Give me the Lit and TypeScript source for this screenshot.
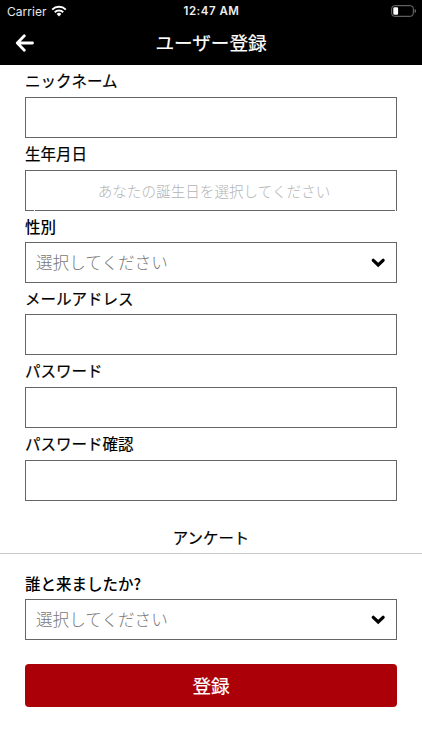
import { LitElement, html, css } from "lit";
import { customElement } from "lit/decorators.js";

@customElement("app-root")
export class AppRoot extends LitElement {
  static styles = css`
    :host { display: block; width: 422px; height: 750px; background: #fff; color: #000; overflow: hidden;
      font-family: "Noto Sans CJK JP", sans-serif; }
    * { box-sizing: border-box; }
    .top { background: #000; color: #fff; height: 65px; }
    .status { height: 21px; display: grid; grid-template-columns: 1fr auto 1fr; align-items: center;
      font: 400 12px/21px Inter, sans-serif; padding: 0 6px 0 7px; }
    .left { display: flex; align-items: center; gap: 4px; letter-spacing: 0.05px; color: #e8e8e8; }
    .time { font-weight: 600; font-size: 11.5px; letter-spacing: 0.5px; color: #eee; padding-top: 1px; }
    .right { display: flex; justify-content: flex-end; }
    .nav { height: 43px; display: grid; grid-template-columns: 50px 1fr 50px; align-items: center; text-align: center; }
    .nav svg { margin-left: 15px; display: block; }
    .title { font: 400 18.6px/41px "Noto Sans CJK JP", sans-serif; height: 43px; -webkit-text-stroke: 0.2px #fff; }
    .form { padding: 0 25px; }
    .label { font: 400 15.5px/31px "Noto Sans CJK JP", sans-serif; height: 32px; -webkit-text-stroke: 0.2px #000; }
    .label.short { height: 31px; line-height: 30px; }
    .label.strong { font-weight: 500; line-height: 31px; -webkit-text-stroke: 0; }
    .box { height: 41px; border: 1px solid #666; display: flex; align-items: center; padding: 0 11px 0 10px;
      font: 300 16.6px/38px "Noto Sans CJK JP", sans-serif; color: #777; justify-content: space-between; }
    .hint { height: 39px; }
    .date { position: relative; justify-content: center; font-size: 14.6px; line-height: 39px; color: #b4b4b4; padding-left: 17px; }
    .date::before, .date::after { content: ""; position: absolute; bottom: -1px; width: 1px; height: 1px; background: #fff; }
    .date::before { left: 8px; }
    .date::after { right: 0; }
    .section { height: 53px; border-bottom: 1px solid #c8c8c8; text-align: center;
      font: 400 15.4px/72px "Noto Sans CJK JP", sans-serif; -webkit-text-stroke: 0.2px #000; }
    .survey { padding: 14px 25px 0; }
    .button { margin-top: 24px; height: 43px; border-radius: 4px; background: #ab0007; color: #fff; text-align: center;
      font: 400 18.6px/41px "Noto Sans CJK JP", sans-serif; -webkit-text-stroke: 0.2px #fff; }
  `;
  chevron() {
    return html`<svg width="14" height="10" viewBox="0 0 14 10"><path d="M2.3 2.3L7.2 7l4.9-4.7" fill="none" stroke="#000" stroke-width="3.2" stroke-linecap="round"/></svg>`;
  }
  render() {
    return html`
      <div class="top">
        <div class="status">
          <div class="left">Carrier
            <svg width="16" height="12" viewBox="0 0 16 12" fill="none" stroke="#fff" stroke-width="2"><path d="M1.2 4.6a9.7 9.7 0 0 1 13.6 0M3.8 7.2a6 6 0 0 1 8.4 0"/><path d="M8 11.4L5.6 9a3.4 3.4 0 0 1 4.8 0z" fill="#fff" stroke="none"/></svg>
          </div>
          <div class="time">12:47 AM</div>
          <div class="right"><svg width="25" height="12" viewBox="0 0 25 12"><rect x=".7" y=".7" width="21.6" height="10.6" rx="2.8" fill="none" stroke="#777"/><rect x="2.3" y="2.2" width="4.8" height="7.6" rx="1.2" fill="#fff"/><path d="M23.7 4v4q1.3-.6 1.3-2t-1.3-2" fill="#777"/></svg></div>
        </div>
        <div class="nav"><svg width="20" height="18" viewBox="0 0 20 18"><path d="M9.3 1.8L2.3 9l7 7.2M2.6 9H17.5" fill="none" stroke="#fff" stroke-width="2.8" stroke-linecap="round" stroke-linejoin="round"/></svg><div class="title">ユーザー登録</div></div>
      </div>
      <div class="form">
        <div class="label">ニックネーム</div><div class="box"></div>
        <div class="label">生年月日</div><div class="box date"><span class="hint">あなたの誕生日を選択してください</span></div>
        <div class="label short strong">性別</div><div class="box"><span class="hint">選択してください</span>${this.chevron()}</div>
        <div class="label short">メールアドレス</div><div class="box"></div>
        <div class="label">パスワード</div><div class="box"></div>
        <div class="label">パスワード確認</div><div class="box"></div>
      </div>
      <div class="section">アンケート</div>
      <div class="survey"><div class="label short strong">誰と来ましたか?</div><div class="box"><span class="hint">選択してください</span>${this.chevron()}</div><div class="button">登録</div></div>`;
  }
}
